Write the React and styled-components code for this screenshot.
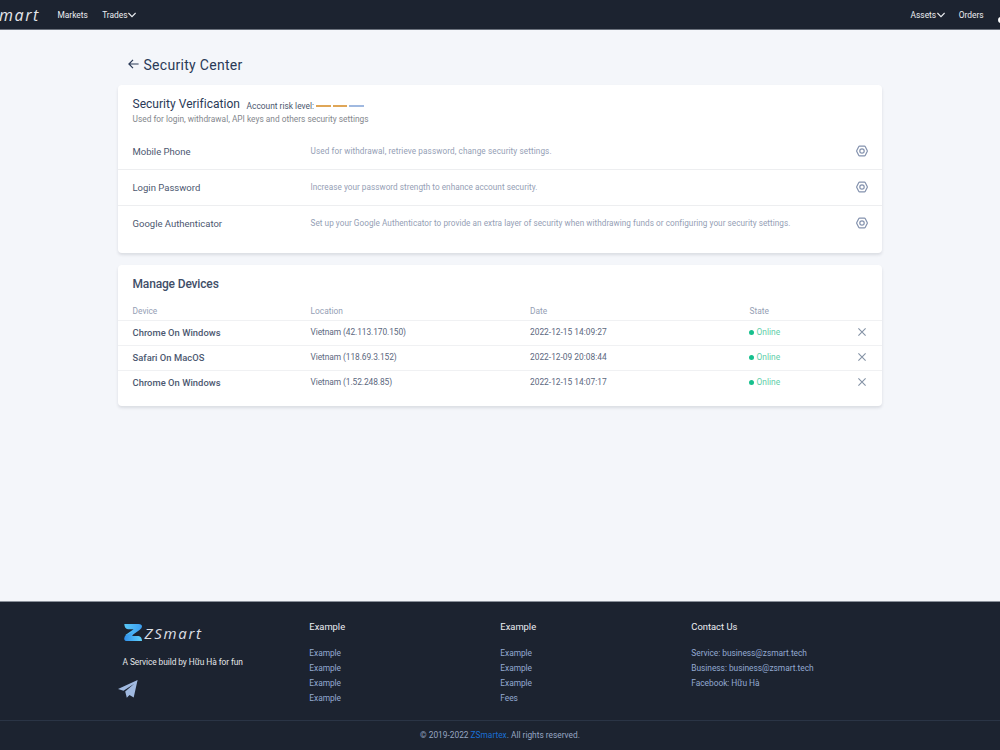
import React from "react";
import styled, { createGlobalStyle } from "styled-components";

const securityItems = [
  { name: "Mobile Phone", desc: "Used for withdrawal, retrieve password, change security settings.", spacing: 0.09 },
  { name: "Login Password", desc: "Increase your password strength to enhance account security.", spacing: 0.03 },
  {
    name: "Google Authenticator",
    desc: "Set up your Google Authenticator to provide an extra layer of security when withdrawing funds or configuring your security settings.",
    spacing: 0.042,
  },
];

const devices = [
  { name: "Chrome On Windows", location: "Vietnam (42.113.170.150)", date: "2022-12-15 14:09:27" },
  { name: "Safari On MacOS", location: "Vietnam (118.69.3.152)", date: "2022-12-09 20:08:44" },
  { name: "Chrome On Windows", location: "Vietnam (1.52.248.85)", date: "2022-12-15 14:07:17" },
];

const footerColumns = [
  { title: "Example", links: ["Example", "Example", "Example", "Example"] },
  { title: "Example", links: ["Example", "Example", "Example", "Fees"] },
  {
    title: "Contact Us",
    links: ["Service: business@zsmart.tech", "Business: business@zsmart.tech", "Facebook: Hữu Hà"],
  },
];

const ChevronIcon = () => (
  <svg width="8" height="6" viewBox="0 0 8 6" fill="none" stroke="currentColor" strokeWidth="1.1">
    <path d="M0.4 1 L4 4.6 L7.6 1" />
  </svg>
);

const BackIcon = () => (
  <svg width="11" height="10" viewBox="0 0 11 10" fill="none" stroke="currentColor" strokeWidth="1.2">
    <path d="M5 0.8 L0.9 5 L5 9.2 M1 5 H10.6" />
  </svg>
);

const SettingIcon = () => (
  <svg width="12" height="12" viewBox="0 0 12 12" fill="none" stroke="currentColor" strokeWidth="1.2">
    <path d="M3.6 1.1 H8.4 Q9 1.1 9.3 1.7 L11.2 5.4 Q11.5 6 11.2 6.6 L9.3 10.3 Q9 10.9 8.4 10.9 H3.6 Q3 10.9 2.7 10.3 L0.8 6.6 Q0.5 6 0.8 5.4 L2.7 1.7 Q3 1.1 3.6 1.1 Z" />
    <circle cx="6" cy="6" r="2.2" />
  </svg>
);

const CloseIcon = () => (
  <svg width="8" height="8" viewBox="0 0 8 8" fill="none" stroke="currentColor" strokeWidth="1.1">
    <path d="M0.4 0.4 L7.6 7.6 M7.6 0.4 L0.4 7.6" />
  </svg>
);

const LogoMark = () => (
  <svg width="18" height="17" viewBox="0 0 18 17">
    <defs>
      <linearGradient id="top" x1="0" x2="1" y1="0" y2="0">
        <stop offset="0" stopColor="#59c8f7" />
        <stop offset="1" stopColor="#3b9df0" />
      </linearGradient>
      <linearGradient id="bottom" x1="0" x2="1" y1="0" y2="0">
        <stop offset="0" stopColor="#2f8eea" />
        <stop offset="1" stopColor="#62d3fb" />
      </linearGradient>
    </defs>
    <path d="M0.3 0 H14.5 Q18 0 18 2.6 Q18 4.3 15.5 6 L9.2 10.6 L2.2 12 L1.4 11 L9.6 5.2 H4 Q0.5 4.8 0.3 0 Z" fill="url(#top)" />
    <path d="M10.4 7.6 L8.2 12 H14.5 Q17.8 12.6 18 17 H3.2 Q0.2 17 0.2 14.4 Q0.2 12.4 2.4 10.8 Z" fill="url(#bottom)" />
  </svg>
);

const TelegramIcon = () => (
  <svg width="20" height="18" viewBox="0 0 20 18" fill="#a0b9e0">
    <path d="M0 9 L19.6 0 L15.7 17.6 L11.5 15 L8.8 17.8 L7.2 11.6 L16.2 3.7 L5.5 10.7 Z" />
  </svg>
);

export default function App() {
  return (
    <Page>
      <GlobalStyle />
      <Navbar>
        <NavLogo>ZSmart</NavLogo>
        <NavLink>Markets</NavLink>
        <NavLink>
          Trades
          <ChevronIcon />
        </NavLink>
        <Spacer />
        <NavLink>
          Assets
          <ChevronIcon />
        </NavLink>
        <NavLink>Orders</NavLink>
        <NavDot />
      </Navbar>

      <Main>
        <PageTitle>
          <BackIcon />
          Security Center
        </PageTitle>

        <Card $bottom={12}>
          <CardHead>
            <CardTitle>Security Verification</CardTitle>
            <RiskLevel>
              Account risk level:
              <RiskBar $color="#dfa657" />
              <RiskBar $color="#dfa657" />
              <RiskBar $color="#a0b9e0" />
            </RiskLevel>
          </CardHead>
          <CardHint>Used for login, withdrawal, API keys and others security settings</CardHint>
          <SecurityList>
            {securityItems.map((item) => (
              <SecurityRow key={item.name}>
                <SecurityName>{item.name}</SecurityName>
                <SecurityDesc $spacing={item.spacing}>{item.desc}</SecurityDesc>
                <SettingIcon />
              </SecurityRow>
            ))}
          </SecurityList>
        </Card>

        <Card $bottom={11}>
          <DevicesTitle>Manage Devices</DevicesTitle>
          <DeviceHead>
            <span>Device</span>
            <span>Location</span>
            <span>Date</span>
            <span>State</span>
          </DeviceHead>
          {devices.map((device) => (
            <DeviceRow key={device.location}>
              <DeviceName>{device.name}</DeviceName>
              <DeviceLocation>{device.location}</DeviceLocation>
              <DeviceDate>{device.date}</DeviceDate>
              <DeviceState>Online</DeviceState>
              <CloseIcon />
            </DeviceRow>
          ))}
        </Card>
      </Main>

      <Footer>
        <FooterColumns>
          <Brand>
            <BrandLogo>
              <LogoMark />
              ZSmart
            </BrandLogo>
            <Slogan>A Service build by Hữu Hà for fun</Slogan>
            <TelegramIcon />
          </Brand>
          {footerColumns.map((column, i) => (
            <FooterColumn key={i}>
              <FooterTitle>{column.title}</FooterTitle>
              {column.links.map((link, j) => (
                <FooterLink key={j}>{link}</FooterLink>
              ))}
            </FooterColumn>
          ))}
        </FooterColumns>
        <Copyright>
          © 2019-2022 <a>ZSmartex</a>. All rights reserved.
        </Copyright>
      </Footer>
    </Page>
  );
}

const GlobalStyle = createGlobalStyle`
  * {
    box-sizing: border-box;
  }

  body {
    margin: 0;
    overflow: hidden;
    font-family: Roboto, "Liberation Sans", sans-serif;
    color: #2a3a57;
  }

  svg {
    display: block;
    flex-shrink: 0;
  }
`;

const Page = styled.div`
  display: flex;
  flex-direction: column;
  width: 1000px;
  height: 750px;
  background: #f4f6fa;
`;

const Navbar = styled.nav`
  display: flex;
  align-items: center;
  height: 30px;
  flex-shrink: 0;
  background: #1c2330;
  border-bottom: 1px solid #6c727d;
  color: #dfe2e8;
  overflow: hidden;
`;

const NavLogo = styled.div`
  display: flex;
  justify-content: flex-end;
  width: 40px;
  margin-right: 17.5px;
  padding-top: 1px;
  font: italic 400 16px "Open Sans", sans-serif;
  letter-spacing: 1.6px;
  color: #e6e8ec;
`;

const NavLink = styled.div`
  display: flex;
  align-items: center;
  gap: 0.4px;
  margin-right: 14.3px;
  font-size: 8.4px;
  white-space: nowrap;
  color: #eceef2;
`;

const Spacer = styled.div`
  flex: 1;
`;

const NavDot = styled.div`
  width: 6px;
  height: 6px;
  margin: 10px -4px 0 0;
  border-radius: 3px;
  background: #fff;
`;

const Main = styled.main`
  flex: 1;
  width: 764px;
  margin: 0 auto;
`;

const PageTitle = styled.h1`
  display: flex;
  align-items: center;
  gap: 4.5px;
  height: 55px;
  margin: 0;
  padding: 14px 0 0 10px;
  font-size: 14px;
  font-weight: 400;
  letter-spacing: 0.3px;

  svg {
    margin-bottom: 1px;
  }
`;

const Card = styled.section`
  margin-bottom: 12px;
  padding-bottom: ${({ $bottom }) => $bottom}px;
  background: #fff;
  border-radius: 4px;
  box-shadow: 0 2px 3px rgba(30, 40, 60, 0.12);
`;

const CardHead = styled.div`
  display: flex;
  align-items: center;
  height: 29px;
  padding: 8px 14.5px 0;
`;

const CardTitle = styled.h2`
  margin: 0;
  font-size: 12px;
  font-weight: 400;
  letter-spacing: 0.03px;
`;

const RiskLevel = styled.div`
  display: flex;
  align-items: center;
  margin: 5px 0 0 6.5px;
  font-size: 8.4px;
  color: #4a566e;
`;

const RiskBar = styled.i`
  width: 14.5px;
  height: 2px;
  margin-left: 2px;
  background: ${({ $color }) => $color};
`;

const CardHint = styled.p`
  margin: 0;
  padding: 0 14.5px;
  font-size: 8.35px;
  line-height: 11px;
  color: #84878d;
`;

const SecurityList = styled.div`
  padding-top: 8px;
`;

const SecurityRow = styled.div`
  display: grid;
  grid-template-columns: 178px 1fr 12px;
  align-items: center;
  height: 36px;
  padding: 0 14px 0 14.5px;
  color: #8492ae;

  & + & {
    padding-bottom: 1px;
    border-top: 1px solid #edeef0;
  }
`;

const SecurityName = styled.div`
  font-size: 9.5px;
  color: #4c5870;
`;

const SecurityDesc = styled.div`
  font-size: 8.2px;
  letter-spacing: ${({ $spacing }) => $spacing}px;
  white-space: nowrap;
  color: #95a0b5;
`;

const DevicesTitle = styled.h2`
  margin: 0;
  padding: 1px 14.5px 0;
  font-size: 12px;
  font-weight: 500;
  letter-spacing: -0.16px;
  line-height: 37px;
  color: #414e68;
`;

const DeviceHead = styled.div`
  display: grid;
  grid-template-columns: 178px 219.5px 219.5px 1fr;
  align-items: center;
  height: 17px;
  padding: 0 14.5px 2px;
  font-size: 8.4px;
  color: #95a0b5;
`;

const DeviceRow = styled.div`
  display: grid;
  grid-template-columns: 178px 219.5px 219.5px 1fr 8px;
  align-items: center;
  height: 25px;
  padding: 0 16px 2px 14.5px;
  border-top: 1px solid #f0f1f3;
  font-size: 8.4px;
  color: #8492a5;
`;

const DeviceName = styled.div`
  font-size: 9.4px;
  font-weight: 500;
  letter-spacing: 0.03px;
  color: #4c5870;
`;

const DeviceLocation = styled.div`
  letter-spacing: -0.08px;
  color: #5c6880;
`;

const DeviceDate = styled.div`
  color: #5c6880;
`;

const DeviceState = styled.div`
  display: flex;
  align-items: center;
  gap: 2.5px;
  color: #5fcfaa;

  &::before {
    content: "";
    width: 5px;
    height: 5px;
    margin-left: -0.4px;
    border-radius: 50%;
    background: #16c08d;
  }
`;

const Footer = styled.footer`
  height: 149px;
  border-top: 1px solid #8a909a;
  background: #1c2330;
`;

const FooterColumns = styled.div`
  display: grid;
  grid-template-columns: repeat(4, 191px);
  width: 764px;
  height: 118px;
  margin: 0 auto;
`;

const Brand = styled.div`
  padding-top: 22px;
`;

const BrandLogo = styled.div`
  display: flex;
  align-items: center;
  gap: 2.5px;
  height: 17px;
  padding-left: 6px;
  font: italic 400 15px "Open Sans", sans-serif;
  letter-spacing: 1.7px;
  color: #dcdfe5;
`;

const Slogan = styled.div`
  margin: 16px 0 12px;
  padding-left: 4.5px;
  font-size: 8.4px;
  letter-spacing: -0.08px;
  line-height: 11px;
  color: #e4e6ea;
`;

const FooterColumn = styled.div`
  padding: 18px 0 0 0.3px;
`;

const FooterTitle = styled.h3`
  margin: 0 0 13px;
  font-size: 9.4px;
  font-weight: 400;
  line-height: 13px;
  color: #eceef2;
`;

const FooterLink = styled.div`
  font-size: 8.4px;
  letter-spacing: -0.04px;
  line-height: 15px;
  color: #93a9d0;
`;

const Copyright = styled.div`
  display: flex;
  justify-content: center;
  border-top: 1px solid #2a3445;
  font-size: 8.35px;
  line-height: 29px;
  color: #97a6c3;
  white-space: pre;

  a {
    color: #1a6fd4;
  }
`;
